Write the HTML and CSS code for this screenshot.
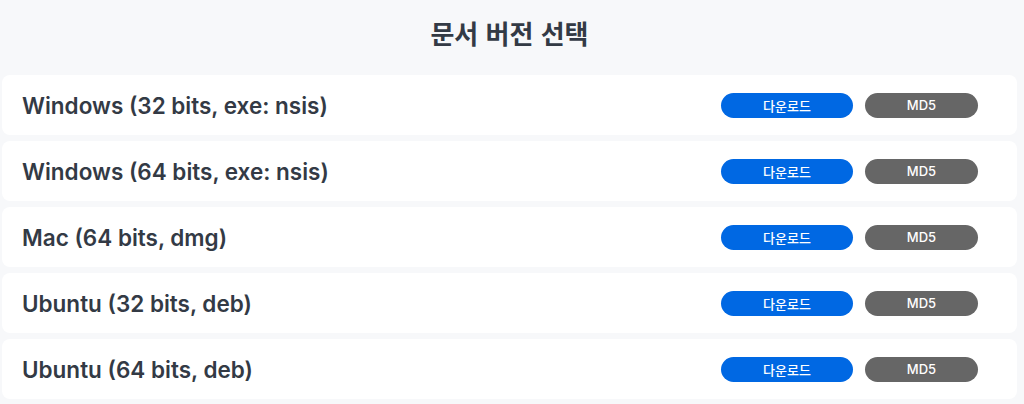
FILE: index.html
```html
<!DOCTYPE html>
<html lang="ko">
<head>
  <meta charset="UTF-8">
  <title>문서 버전 선택</title>
  <link rel="stylesheet" href="styles.css">
</head>
<body>
  <h2>문서 버전 선택</h2>
  <div class='version-list'>
    <div class='version-row'>
      <span class='version-name'>Windows (32 bits, exe: nsis)</span>
      <div class='actions'><button class='btn download'>다운로드</button><button class='btn md5'>MD5</button></div>
    </div>
    <div class='version-row'>
      <span class='version-name'>Windows (64 bits, exe: nsis)</span>
      <div class='actions'><button class='btn download'>다운로드</button><button class='btn md5'>MD5</button></div>
    </div>
    <div class='version-row'>
      <span class='version-name'>Mac (64 bits, dmg)</span>
      <div class='actions'><button class='btn download'>다운로드</button><button class='btn md5'>MD5</button></div>
    </div>
    <div class='version-row'>
      <span class='version-name'>Ubuntu (32 bits, deb)</span>
      <div class='actions'><button class='btn download'>다운로드</button><button class='btn md5'>MD5</button></div>
    </div>
    <div class='version-row'>
      <span class='version-name'>Ubuntu (64 bits, deb)</span>
      <div class='actions'><button class='btn download'>다운로드</button><button class='btn md5'>MD5</button></div>
    </div>
  </div>
</body>
</html>
```
FILE: styles.css
```css
body { font-family: Inter, "Noto Sans CJK KR", sans-serif; background-color: #f7f8fa; color: #333a45; margin: 0; padding: 0 7px 0 2px; }
h2 { text-align: center; font-family: "Noto Sans CJK KR", sans-serif; font-size: 26px; font-weight: 700; margin: 0; height: 75px; line-height: 66px; }
.version-list { display: flex; flex-direction: column; gap: 6px; }
.version-row { display: flex; align-items: center; justify-content: space-between; height: 60px; padding: 0 39px 0 20px; background-color: #fff; border-radius: 8px; }
.version-name { font-size: 22.5px; font-weight: 600; }
.actions { display: flex; gap: 12px; }
.btn { height: 25px; border: none; border-radius: 13px; color: #fff; font-family: Inter, "Noto Sans CJK KR", sans-serif; font-size: 13px; font-weight: 500; padding: 0; cursor: pointer; }
.download { width: 132px; background-color: #0068e3; }
.md5 { width: 113px; background-color: #666; }
```
